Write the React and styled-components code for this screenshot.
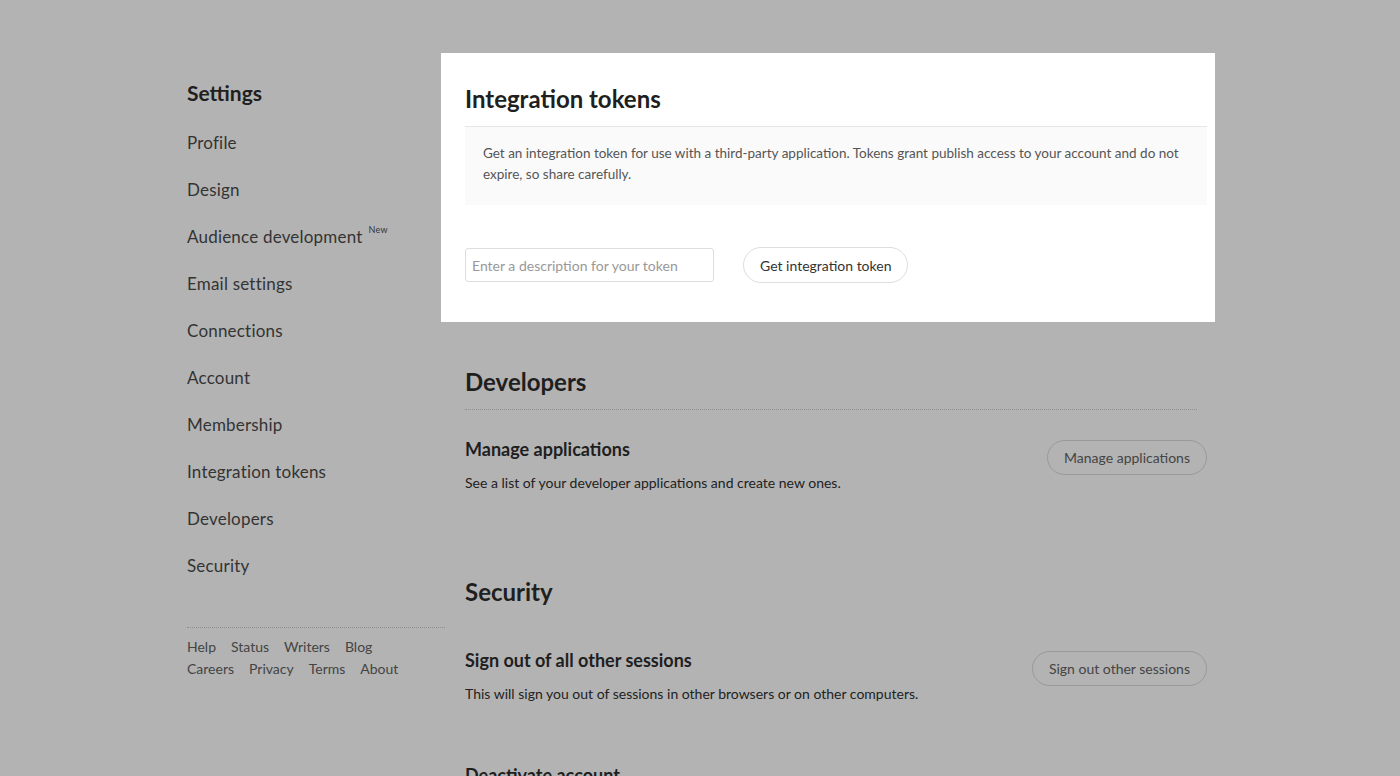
import React from 'react'
import styled, { createGlobalStyle } from 'styled-components'

const Global = createGlobalStyle`
  html, body {
    margin: 0;
    padding: 0;
    background: #b3b3b3;
    font-family: Lato, "Liberation Sans", sans-serif;
    color: #222;
  }
`

const Page = styled.div`
  width: 1028px;
  margin-left: calc(50% - 513px);
  padding-top: 53px;
  display: flex;
  height: 723px;
  overflow: hidden;
`

const Sidebar = styled.aside`
  width: 258px;
  flex-shrink: 0;
  margin-right: -4px;
  padding-top: 26px;
`

const SideTitle = styled.h2`
  margin: 0 0 22px;
  font-size: 21px;
  line-height: 28px;
  font-weight: 700;
  color: #1f1f1f;
`

const NavList = styled.ul`
  list-style: none;
  margin: 0;
  padding: 0;
`

const NavItem = styled.li`
  font-size: 17px;
  line-height: 27px;
  margin-bottom: 20px;
  color: #333;
  letter-spacing: 0.2px;
`

const NewTag = styled.sup`
  font-size: 9px;
  line-height: 0;
  margin-left: 6px;
  vertical-align: 10px;
`

const Footer = styled.div`
  margin-top: 48px;
  border-top: 1px dotted #8f8f8f;
  padding-top: 8px;
  width: 258px;
`

const FootRow = styled.div`
  display: flex;
`

const FootLink = styled.a`
  font-size: 14px;
  line-height: 22px;
  color: #444;
  margin-right: 15px;
  text-decoration: none;
`

const Main = styled.main`
  flex: 1;
`

const Card = styled.section`
  background: #fff;
  padding: 30px 8px 39px 24px;
`

const Section = styled.section`
  padding: 0 8px 0 24px;
  margin-top: ${p => p.$top || 44}px;
`

const SectionTitle = styled.h2`
  margin: 0;
  font-size: 24px;
  line-height: 32px;
  font-weight: 700;
  color: #1f1f1f;
  padding-bottom: ${p => p.$pad || 0}px;
  border-bottom: ${p => p.$line || 'none'};
  margin-right: ${p => p.$mr || 0}px;
`

const InfoBox = styled.div`
  background: #fafafa;
  padding: 16px 24px 20px 18px;
  font-size: 13.5px;
  line-height: 21px;
  color: #555;
`

const TokenRow = styled.div`
  display: flex;
  align-items: center;
  gap: 29px;
  margin-top: 42px;
`

const Input = styled.input`
  width: 249px;
  height: 34px;
  box-sizing: border-box;
  border: 1px solid #ddd;
  border-radius: 3px;
  padding: 0 6px;
  font-family: inherit;
  font-size: 14px;
  color: #333;
  &::placeholder {
    color: #999;
  }
`

const PillButton = styled.button`
  height: ${p => p.$h || 36}px;
  padding: 0 16px;
  border-radius: 20px;
  border: 1px solid ${p => (p.$onGray ? '#999' : '#ddd')};
  background: transparent;
  font-family: inherit;
  font-size: 14px;
  color: ${p => (p.$onGray ? '#444' : '#333')};
  white-space: nowrap;
`

const Row = styled.div`
  display: flex;
  justify-content: space-between;
  align-items: flex-start;
  margin-top: ${p => p.$top}px;
`

const RowText = styled.div``

const RowTitle = styled.h3`
  margin: 0;
  font-size: 18px;
  line-height: 24px;
  font-weight: 700;
  color: #1f1f1f;
`

const RowDesc = styled.p`
  margin: 12px 0 0;
  font-size: 14px;
  line-height: 20px;
  color: #222;
`

const ButtonSlot = styled.div`
  padding-top: 3px;
`

const nav = [
  'Profile',
  'Design',
  'Audience development',
  'Email settings',
  'Connections',
  'Account',
  'Membership',
  'Integration tokens',
  'Developers',
  'Security',
]

export default function App() {
  return (
    <>
      <Global />
      <Page>
        <Sidebar>
          <SideTitle>Settings</SideTitle>
          <NavList>
            {nav.map(n => (
              <NavItem key={n}>
                {n}
                {n === 'Audience development' && <NewTag>New</NewTag>}
              </NavItem>
            ))}
          </NavList>
          <Footer>
            <FootRow>
              <FootLink>Help</FootLink>
              <FootLink>Status</FootLink>
              <FootLink>Writers</FootLink>
              <FootLink>Blog</FootLink>
            </FootRow>
            <FootRow>
              <FootLink>Careers</FootLink>
              <FootLink>Privacy</FootLink>
              <FootLink>Terms</FootLink>
              <FootLink>About</FootLink>
            </FootRow>
          </Footer>
        </Sidebar>
        <Main>
          <Card>
            <SectionTitle $pad={11} $line="1px solid #e6e6e6">
              Integration tokens
            </SectionTitle>
            <InfoBox>
              Get an integration token for use with a third-party application. Tokens grant
              publish access to your account and do not expire, so share carefully.
            </InfoBox>
            <TokenRow>
              <Input placeholder="Enter a description for your token" />
              <PillButton>Get integration token</PillButton>
            </TokenRow>
          </Card>

          <Section $top={44}>
            <SectionTitle $pad={11} $mr={10} $line="1px dotted #8f8f8f">
              Developers
            </SectionTitle>
            <Row $top={27}>
              <RowText>
                <RowTitle>Manage applications</RowTitle>
                <RowDesc>See a list of your developer applications and create new ones.</RowDesc>
              </RowText>
              <ButtonSlot>
                <PillButton $onGray $h={35}>Manage applications</PillButton>
              </ButtonSlot>
            </Row>
          </Section>

          <Section $top={83}>
            <SectionTitle>Security</SectionTitle>
            <Row $top={40}>
              <RowText>
                <RowTitle>Sign out of all other sessions</RowTitle>
                <RowDesc>This will sign you out of sessions in other browsers or on other computers.</RowDesc>
              </RowText>
              <ButtonSlot>
                <PillButton $onGray $h={35}>Sign out other sessions</PillButton>
              </ButtonSlot>
            </Row>
            <Row $top={59}>
              <RowText>
                <RowTitle>Deactivate account</RowTitle>
              </RowText>
            </Row>
          </Section>
        </Main>
      </Page>
    </>
  )
}
